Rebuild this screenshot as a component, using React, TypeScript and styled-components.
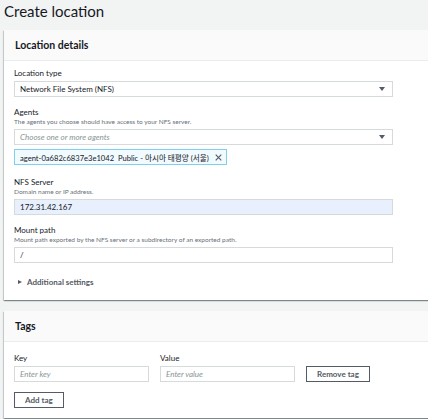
import React from "react";
import styled, { createGlobalStyle } from "styled-components";

const GlobalStyle = createGlobalStyle`
  html, body {
    margin: 0;
    padding: 0;
    background: #f2f3f3;
    overflow: hidden;
  }
  body {
    font-family: Lato, "Noto Sans CJK KR", sans-serif;
    color: #16191f;
  }
`;

const Page = styled.div`
  width: 440px;
  padding-left: 4px;
`;

const Title = styled.h1`
  margin: 0;
  height: 30px;
  font-size: 15px;
  font-weight: 400;
  line-height: 22px;
`;

const Panel = styled.section`
  background: #fff;
  box-shadow: 0 1px 1px 0 rgba(0, 28, 36, 0.3), 1px 1px 1px 0 rgba(0, 28, 36, 0.15),
    -1px 1px 1px 0 rgba(0, 28, 36, 0.15);
  margin-bottom: 11px;
`;

const PanelHeader = styled.header`
  height: 31px;
  box-sizing: border-box;
  display: flex;
  align-items: center;
  padding-left: 11px;
  background: #fafafa;
  border-bottom: 1px solid #eaeded;
  font-size: 10.5px;
  font-weight: 700;
`;

const PanelBody = styled.div<{ $top: number; $bottom: number }>`
  padding: ${(p) => p.$top}px 10px ${(p) => p.$bottom}px 10px;
  display: flex;
  flex-direction: column;
  gap: 10px;
`;

const Field = styled.div<{ $width?: number }>`
  display: flex;
  flex-direction: column;
  width: ${(p) => (p.$width ? `${p.$width}px` : "379px")};
`;

const Label = styled.label`
  font-size: 8px;
  line-height: 10px;
`;

const Description = styled.div`
  font-size: 6.5px;
  line-height: 9px;
  color: #687078;
`;

const Control = styled.div<{ $filled?: boolean }>`
  margin-top: 3px;
  height: 16px;
  box-sizing: border-box;
  border: 1px solid #d5dbdb;
  background: ${(p) => (p.$filled ? "#e8f0fe" : "#fff")};
  display: flex;
  align-items: center;
  padding: 0 7px 0 5px;
  font-size: 8px;
`;

const Placeholder = styled.span`
  color: #879596;
  font-style: italic;
`;

const Value = styled.span`
  flex: 1;
`;

const Caret = styled.span`
  width: 0;
  height: 0;
  border-left: 3px solid transparent;
  border-right: 3px solid transparent;
  border-top: 4px solid #545b64;
  margin-left: auto;
`;

const Chip = styled.div`
  margin-top: 4px;
  margin-bottom: 2px;
  align-self: flex-start;
  height: 16px;
  box-sizing: border-box;
  display: flex;
  align-items: center;
  gap: 6px;
  padding: 0 4px 0 5px;
  border: 1px solid #7fd1e8;
  background: #f1faff;
  font-size: 7.6px;
  white-space: pre;
`;

const Expander = styled.div`
  margin-top: 4px;
  display: flex;
  align-items: center;
  gap: 5px;
  padding-left: 4px;
  font-size: 8px;
  font-weight: 700;
  line-height: 10px;
  color: #545b64;
`;

const Arrow = styled.span`
  width: 0;
  height: 0;
  border-top: 2.5px solid transparent;
  border-bottom: 2.5px solid transparent;
  border-left: 4px solid #545b64;
`;

const TagRow = styled.div`
  display: flex;
  align-items: flex-end;
  gap: 11px;
`;

const Button = styled.button<{ $end?: boolean }>`
  height: 16px;
  box-sizing: border-box;
  border: 1px solid #545b64;
  background: #fff;
  color: #545b64;
  font-family: inherit;
  font-size: 8px;
  font-weight: 700;
  padding: 0 10px;
  align-self: ${(p) => (p.$end ? "flex-end" : "flex-start")};
`;

const CloseIcon = () => (
  <svg width="7" height="7" viewBox="0 0 10 10">
    <path d="M1 1 L9 9 M9 1 L1 9" stroke="#545b64" strokeWidth="1.6" />
  </svg>
);

export default function App() {
  return (
    <>
      <GlobalStyle />
      <Page>
        <Title>Create location</Title>
        <Panel>
          <PanelHeader>Location details</PanelHeader>
          <PanelBody $top={7} $bottom={13}>
            <Field>
              <Label>Location type</Label>
              <Control>
                <Value>Network File System (NFS)</Value>
                <Caret />
              </Control>
            </Field>
            <Field>
              <Label>Agents</Label>
              <Description>The agents you choose should have access to your NFS server.</Description>
              <Control>
                <Placeholder>Choose one or more agents</Placeholder>
                <Caret />
              </Control>
              <Chip>
                {"agent-0a682c6837e3e1042  Public - 아시아 태평양 (서울)"}
                <CloseIcon />
              </Chip>
            </Field>
            <Field>
              <Label>NFS Server</Label>
              <Description>Domain name or IP address.</Description>
              <Control $filled>
                <Value>172.31.42.167</Value>
              </Control>
            </Field>
            <Field>
              <Label>Mount path</Label>
              <Description>
                Mount path exported by the NFS server or a subdirectory of an exported path.
              </Description>
              <Control>
                <Value>/</Value>
              </Control>
            </Field>
            <Expander>
              <Arrow />
              Additional settings
            </Expander>
          </PanelBody>
        </Panel>
        <Panel>
          <PanelHeader>Tags</PanelHeader>
          <PanelBody $top={11} $bottom={10}>
            <TagRow>
              <Field $width={135}>
                <Label>Key</Label>
                <Control>
                  <Placeholder>Enter key</Placeholder>
                </Control>
              </Field>
              <Field $width={135}>
                <Label>Value</Label>
                <Control>
                  <Placeholder>Enter value</Placeholder>
                </Control>
              </Field>
              <Button $end>Remove tag</Button>
            </TagRow>
            <Button>Add tag</Button>
          </PanelBody>
        </Panel>
      </Page>
    </>
  );
}
